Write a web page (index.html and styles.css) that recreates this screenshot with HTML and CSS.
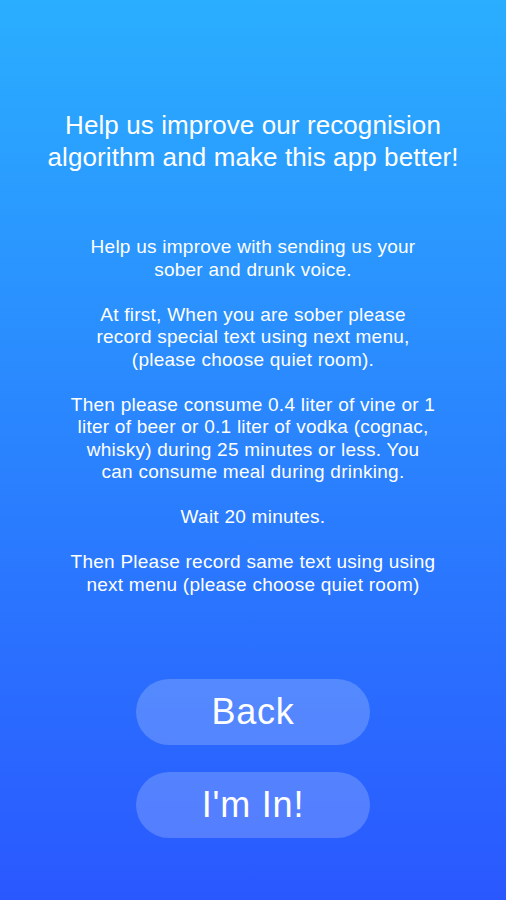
FILE: index.html
```html
<!DOCTYPE html>
<html lang="en">
<head>
    <meta charset="UTF-8">
    <meta name="viewport" content="width=device-width, initial-scale=1.0">
    <title>Help us</title>
    <link rel="stylesheet" href="styles.css">
</head>
<body>
    <div class="screen">
        <h1 class="title">Help us improve our recognision<br>algorithm and make this app better!</h1>

        <div class="info">
            <p>Help us improve with sending us your<br>sober and drunk voice.</p>
            <p>At first, When you are sober please<br>record special text using next menu,<br>(please choose quiet room).</p>
            <p>Then please consume 0.4 liter of vine or 1<br>liter of beer or 0.1 liter of vodka (cognac,<br>whisky) during 25 minutes or less. You<br>can consume meal during drinking.</p>
            <p>Wait 20 minutes.</p>
            <p>Then Please record same text using using<br>next menu (please choose quiet room)</p>
        </div>

        <!-- Buttons -->
        <div class="buttons">
            <button type="button">Back</button>
            <button type="button">I'm In!</button>
        </div>
    </div>
</body>
</html>
```

FILE: styles.css
```css
* {
    margin: 0;
    padding: 0;
    box-sizing: border-box;
}
body {
    font-family: "Liberation Sans", Arial, sans-serif;
    color: white;
}
.screen {
    width: 506px;
    height: 900px;
    background: linear-gradient(to bottom, #2aaeff 0%, #2a83fe 50%, #2a58ff 100%);
    display: flex;
    flex-direction: column;
    align-items: center;
    padding-top: 109px;
}
.title {
    font-size: 26px;
    font-weight: normal;
    line-height: 32px;
    text-align: center;
    letter-spacing: 0.1px;
}
.info {
    margin-top: 63px;
    font-size: 19px;
    line-height: 22.5px;
    text-align: center;
    letter-spacing: 0.25px;
    display: flex;
    flex-direction: column;
    gap: 22.5px;
}
.buttons {
    margin-top: 83px;
    display: flex;
    flex-direction: column;
    gap: 27px;
}
.buttons button {
    width: 234px;
    height: 66px;
    border: none;
    border-radius: 33px;
    background-color: rgba(255, 255, 255, 0.2);
    color: white;
    font-family: "Liberation Sans", Arial, sans-serif;
    font-size: 36px;
    letter-spacing: 0.8px;
    cursor: pointer;
}
```
